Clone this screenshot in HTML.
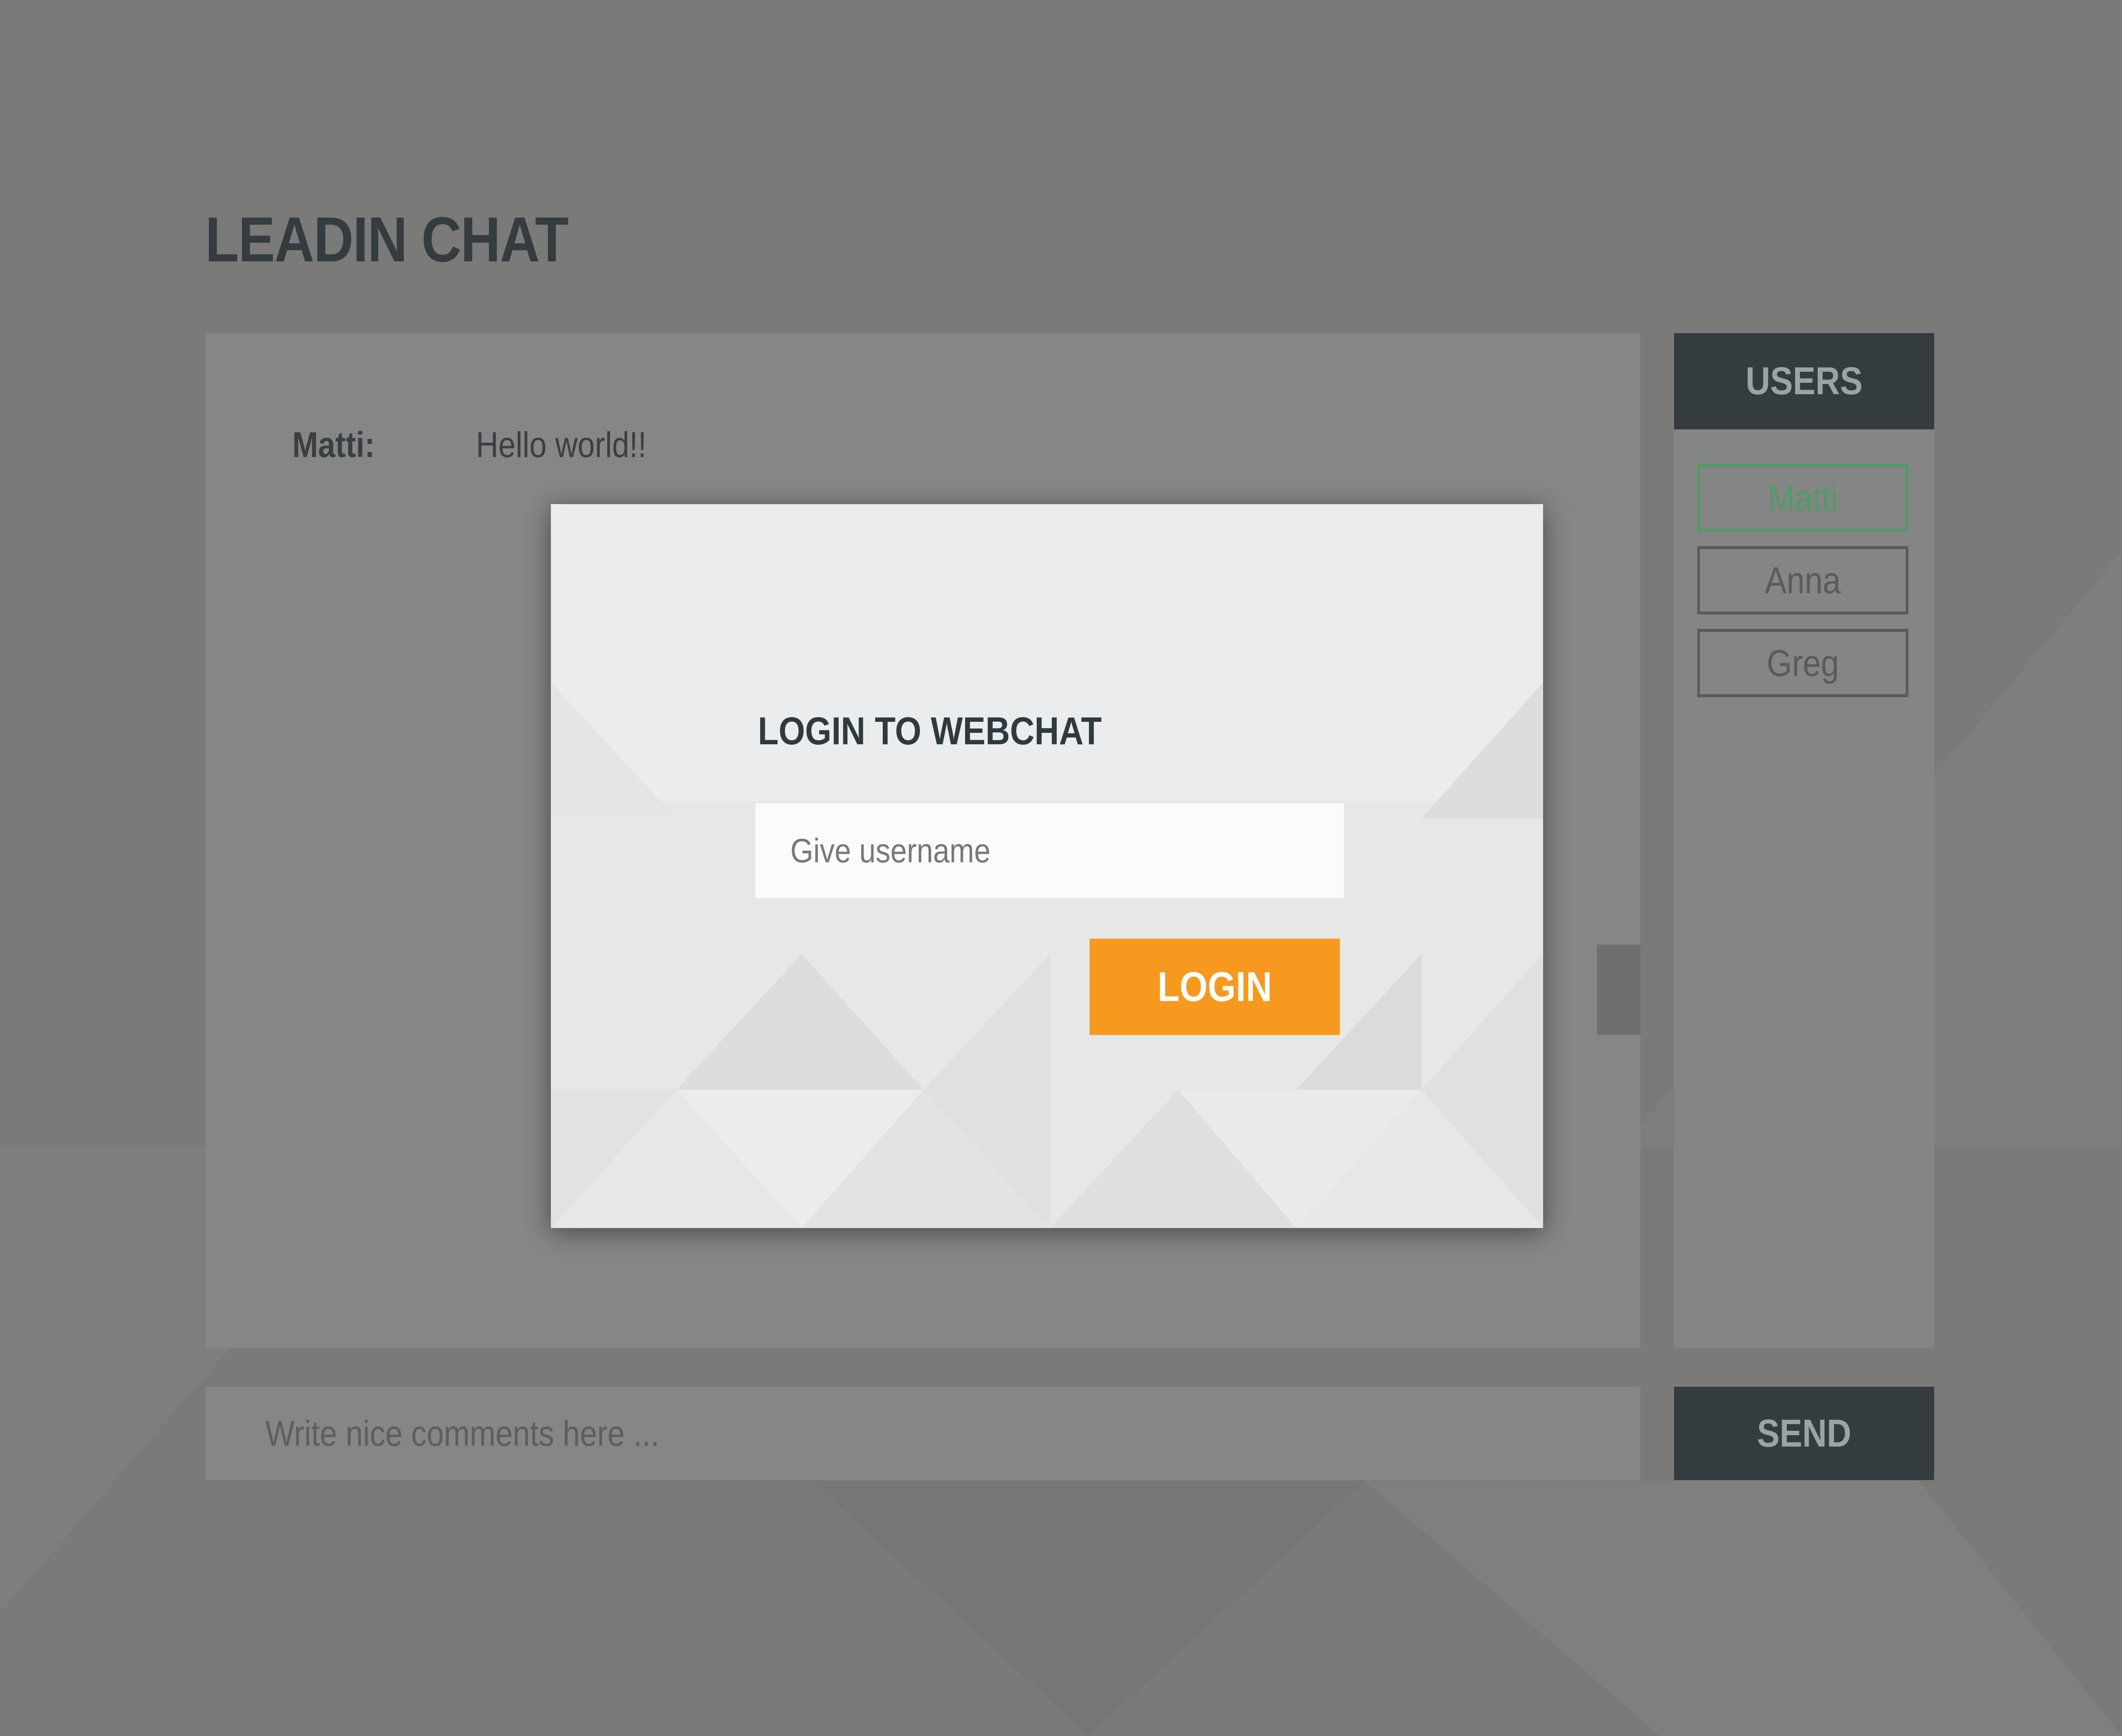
<!DOCTYPE html>
<html><head><meta charset="utf-8"><style>
html,body{margin:0;padding:0;overflow:hidden}
body{background:#7a7b79}
#w{width:5751px;height:4091px;background:#7a7b79;position:relative;overflow:hidden;font-family:"Liberation Sans",sans-serif;transform-origin:0 0}
.a{position:absolute}
</style></head><body>
<div id="w">
<svg class="a" style="left:0;top:0" width="5751" height="4091">
<polygon points="0,2700 1100,2700 0,3800" fill="#7e7f7d"/>
<polygon points="5751,1300 5751,2700 4400,2700" fill="#7e7f7d"/>
<polygon points="2200,3490 3700,3490 2950,4091" fill="#767775"/>
<polygon points="3700,3490 5200,3490 5751,4091 4500,4091" fill="#7f807e"/>
</svg>
<div class="a" style="left:556px;top:478px;font-size:150px;font-weight:bold;color:#343c40;letter-spacing:-2px">LEADIN CHAT</div>
<div class="a" style="left:558px;top:785px;width:3888px;height:2392px;background:#868686"></div>
<div class="a" style="left:792px;top:1000px;font-size:84px;font-weight:bold;color:#3a3f42">Matti:</div>
<div class="a" style="left:1290px;top:1000px;font-size:84px;color:#3a3f42">Hello world!!</div>
<div class="a" style="left:4328px;top:2226px;width:118px;height:213px;background:#6f6f6f"></div>
<div class="a" style="left:4537px;top:785px;width:705px;height:227px;background:#353c3f;color:#9aa3a6;font-size:92px;font-weight:bold;text-align:center;line-height:227px">USERS</div>
<div class="a" style="left:4537px;top:1012px;width:705px;height:2165px;background:#858585"></div>
<div class="a" style="left:4600px;top:1093px;width:558px;height:147px;border:7px solid #4f9b6a;color:#4f9b6a;font-size:88px;text-align:center;line-height:147px">Matti</div>
<div class="a" style="left:4600px;top:1287px;width:558px;height:147px;border:7px solid #5a5a5a;color:#5a5a5a;font-size:88px;text-align:center;line-height:147px">Anna</div>
<div class="a" style="left:4600px;top:1482px;width:558px;height:147px;border:7px solid #5a5a5a;color:#5a5a5a;font-size:88px;text-align:center;line-height:147px">Greg</div>
<div class="a" style="left:558px;top:3268px;width:3888px;height:220px;background:#868686"></div>
<div class="a" style="left:719px;top:3268px;line-height:220px;font-size:84px;color:#5e5e5e">Write nice comments here ...</div>
<div class="a" style="left:4537px;top:3268px;width:705px;height:220px;background:#353c3f;color:#9aa3a6;font-size:92px;font-weight:bold;text-align:center;line-height:220px">SEND</div>
<div class="a" style="left:1493px;top:1188px;width:2689px;height:1706px;background:#eaeced;box-shadow:0 10px 60px rgba(0,0,0,0.45);overflow:hidden">
<svg class="a" style="left:0;top:0" width="2689" height="1706">
<polygon points="0,700 2689,700 2689,1706 0,1706" fill="#e6e7e7"/>
<polygon points="0,1380 340,1380 0,1706" fill="#e1e2e2"/>
<polygon points="340,1380 1010,1380 680,1706" fill="#ebecec"/>
<polygon points="1010,1380 680,1706 1353,1706" fill="#e2e3e3"/>
<polygon points="680,1060 340,1380 1010,1380" fill="#dcdddc"/>
<polygon points="1353,1060 1353,1706 1010,1380" fill="#dfe0e0"/>
<polygon points="1700,1380 2360,1380 2020,1706 1700,1706" fill="#e9eaea"/>
<polygon points="2360,1380 2689,1060 2689,1706" fill="#dfe0e0"/>
<polygon points="1700,1380 1353,1706 2020,1706" fill="#dedfdf"/>
<polygon points="2689,420 2689,740 2360,740" fill="#dcdede"/>
<polygon points="2360,1060 2020,1380 2360,1380" fill="#dadbda"/>
<polygon points="0,420 340,740 0,740" fill="#e4e6e6"/>
</svg>
<div class="a" style="left:561px;top:483px;font-size:92px;font-weight:bold;color:#2f3a3f">LOGIN TO WEBCHAT</div>
<div class="a" style="left:554px;top:705px;width:1595px;height:223px;background:#fbfbfb"></div>
<div class="a" style="left:649px;top:705px;line-height:223px;font-size:80px;color:#75797b">Give username</div>
<div class="a" style="left:1460px;top:1024px;width:678px;height:227px;background:#f7981f;color:#fff;font-size:98px;font-weight:bold;text-align:center;line-height:227px">LOGIN</div>
</div>
</div>
<script>
(function(){var w=document.getElementById('w');var sx=window.innerWidth/5751,sy=window.innerHeight/4091;if(Math.abs(sx-1)>0.001||Math.abs(sy-1)>0.001){w.style.transform='scale('+sx+','+sy+')';}})();
</script>
</body></html>
